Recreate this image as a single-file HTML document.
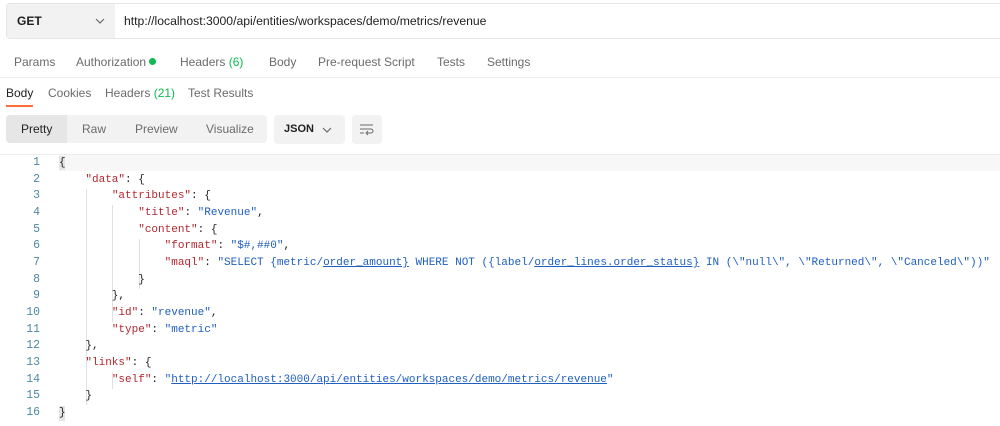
<!DOCTYPE html>
<html><head><style>
*{margin:0;padding:0;box-sizing:border-box}
body{width:1000px;height:426px;background:#fff;font-family:"Liberation Sans",sans-serif;position:relative;overflow:hidden;color:#212121}
.abs{position:absolute}
.url{left:6px;top:3px;width:1000px;height:36px;border:1px solid #e6e6e6;border-radius:4px;overflow:hidden}
.get{left:0;top:0;width:108px;height:34px;background:#f2f2f2;font-weight:bold;font-size:12px;line-height:34px;padding-left:10px;color:#212121}
.tab{font-size:12px;color:#6b6b6b;top:55px}
.btab{font-size:12px;color:#6b6b6b;top:86px}
.g{color:#0cbb52}
.ln{left:0;width:40px;text-align:right;font-family:"Liberation Mono",monospace;font-size:11.5px;color:#4b8aa0}
.code{left:59px;top:155px;font-family:"Liberation Mono",monospace;font-size:11px;line-height:16.67px;white-space:pre;color:#212121}
.k{color:#b4272f}.s{color:#1f5fbf}.u{text-decoration:underline}
.vl{position:absolute;width:1px;background:#e0e0e0}
</style></head><body>
<div class="abs url"><div class="abs get">GET<svg class="abs" style="left:88px;top:13px" width="10" height="8"><path d="M1 2l4 4 4-4" stroke="#6b6b6b" fill="none" stroke-width="1.2"/></svg></div>
<div class="abs" style="left:117px;top:0;line-height:34px;font-size:12.2px;color:#212121">http://localhost:3000/api/entities/workspaces/demo/metrics/revenue</div></div>
<div class="abs tab" style="left:14px">Params</div>
<div class="abs tab" style="left:76px">Authorization <span style="display:inline-block;width:7px;height:7px;border-radius:50%;background:#0cbb52;vertical-align:1px"></span></div>
<div class="abs tab" style="left:180px">Headers <span class="g">(6)</span></div>
<div class="abs tab" style="left:269px">Body</div>
<div class="abs tab" style="left:318px">Pre-request Script</div>
<div class="abs tab" style="left:437px">Tests</div>
<div class="abs tab" style="left:487px">Settings</div>
<div class="abs" style="left:0;top:77px;width:1000px;height:1px;background:#ececec"></div>
<div class="abs btab" style="left:6px;color:#212121">Body</div>
<div class="abs" style="left:6px;top:105px;width:27px;height:2px;background:#ff6c37"></div>
<div class="abs btab" style="left:48px">Cookies</div>
<div class="abs btab" style="left:105px">Headers <span class="g">(21)</span></div>
<div class="abs btab" style="left:188px">Test Results</div>
<div class="abs" style="left:6px;top:115px;width:261px;height:28px;background:#f2f2f2;border-radius:4px"></div>
<div class="abs" style="left:6px;top:115px;width:61px;height:28px;background:#e6e6e6;border-radius:4px 0 0 4px"></div>
<div class="abs" style="left:21px;top:122px;font-size:12px;color:#212121">Pretty</div>
<div class="abs" style="left:82px;top:122px;font-size:12px;color:#6b6b6b">Raw</div>
<div class="abs" style="left:135px;top:122px;font-size:12px;color:#6b6b6b">Preview</div>
<div class="abs" style="left:206px;top:122px;font-size:12px;color:#6b6b6b">Visualize</div>
<div class="abs" style="left:274px;top:115px;width:71px;height:29px;background:#f2f2f2;border-radius:4px"></div>
<div class="abs" style="left:284px;top:123px;font-size:11px;font-weight:bold;color:#212121">JSON</div>
<svg class="abs" style="left:322px;top:126px" width="10" height="8"><path d="M1 2l4 4 4-4" stroke="#6b6b6b" fill="none" stroke-width="1.2"/></svg>
<div class="abs" style="left:352px;top:115px;width:30px;height:29px;background:#f2f2f2;border-radius:4px"></div>
<svg class="abs" style="left:359px;top:122px" width="16" height="14"><path d="M1 3h13M1 7h11a2 2 0 010 4H8M1 11h4M9 9l-2 2 2 2" stroke="#6b6b6b" fill="none" stroke-width="1"/></svg>
<div class="abs" style="left:0;top:154px;width:1000px;height:1px;background:#ececec"></div>
<div class="abs" style="left:59px;top:155px;width:941px;height:16px;background:#f7f7f7"></div>
<div class="abs" style="left:59px;top:156px;width:6px;height:14px;background:#e4e4e4"></div>
<div class="abs" style="left:59px;top:406px;width:6px;height:15px;background:#e4e4e4"></div>
<div class="abs ln" style="top:155px;line-height:16.67px;white-space:pre">1
2
3
4
5
6
7
8
9
10
11
12
13
14
15
16</div>
<div class="vl" style="left:86px;top:189px;height:216px"></div>
<div class="vl" style="left:112px;top:205px;height:117px"></div>
<div class="vl" style="left:139px;top:239px;height:50px"></div>
<div class="vl" style="left:112px;top:372px;height:17px"></div>
<div class="abs code">{
    <span class="k">"data"</span>: {
        <span class="k">"attributes"</span>: {
            <span class="k">"title"</span>: <span class="s">"Revenue"</span>,
            <span class="k">"content"</span>: {
                <span class="k">"format"</span>: <span class="s">"$#,##0"</span>,
                <span class="k">"maql"</span>: <span class="s">"SELECT {metric/<span class="u">order_amount}</span> WHERE NOT ({label/<span class="u">order_lines.order_status}</span> IN (\"null\", \"Returned\", \"Canceled\"))"</span>
            }
        },
        <span class="k">"id"</span>: <span class="s">"revenue"</span>,
        <span class="k">"type"</span>: <span class="s">"metric"</span>
    },
    <span class="k">"links"</span>: {
        <span class="k">"self"</span>: <span class="s">"<span class="u">http://localhost:3000/api/entities/workspaces/demo/metrics/revenue</span>"</span>
    }
}</div>
</body></html>
